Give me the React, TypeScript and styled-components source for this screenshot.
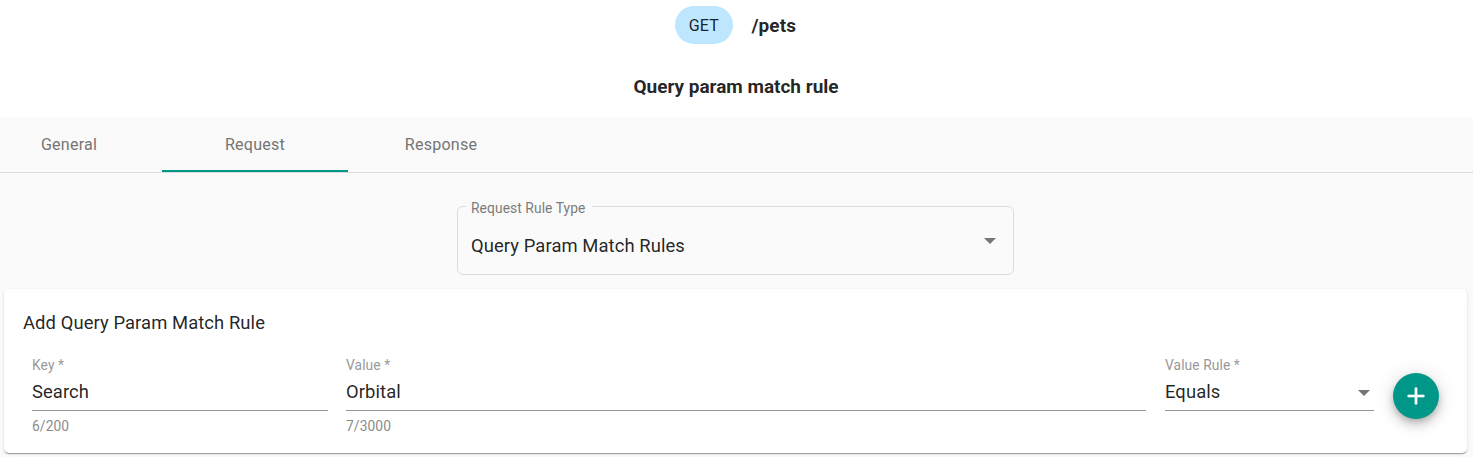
import React from 'react';
import styled, { createGlobalStyle } from 'styled-components';

const GlobalStyle = createGlobalStyle`
  *, *::before, *::after { box-sizing: border-box; }
  body {
    margin: 0;
    background: #fafafa;
    color: rgba(0, 0, 0, 0.87);
    font-family: Roboto, "Liberation Sans", sans-serif;
    font-size: 18.4px;
    font-weight: 400;
    letter-spacing: 0.09px;
  }
`;

const Page = styled.main`
  height: 457px;
  overflow: hidden;
`;

const Header = styled.header`
  height: 117px;
  padding: 6px 1px 0 0;
  background: #fff;
  display: flex;
  flex-direction: column;
  align-items: center;
`;

const Endpoint = styled.div`
  display: flex;
  align-items: center;
  gap: 18.5px;
  height: 38px;
  padding-right: 1px;
`;

const Method = styled.span`
  width: 58px;
  height: 38px;
  border-radius: 19px;
  background: #bfe6ff;
  line-height: 39px;
  text-align: center;
  font-size: 16.1px;
`;

const Path = styled.span`
  font-size: 19px;
  font-weight: 700;
  line-height: 38px;
  letter-spacing: 0.1px;
  padding-top: 1px;
`;

const Title = styled.h1`
  margin: 29px 0 0;
  font-size: 19px;
  font-weight: 700;
  line-height: 28px;
  letter-spacing: -0.02px;
`;

const TabBar = styled.nav`
  display: flex;
  height: 56px;
  margin-left: -24px;
  border-bottom: 1px solid #dcdcdc;
`;

const Tab = styled.button<{ $active?: boolean }>`
  width: 186px;
  height: 55px;
  padding: 2px 0 0;
  border: 0;
  border-bottom: 2px solid ${(p) => (p.$active ? '#009688' : 'transparent')};
  background: none;
  color: #757575;
  font-family: inherit;
  font-size: 16.1px;
  font-weight: 450;
  letter-spacing: 0.2px;
`;

const OutlinedSelect = styled.fieldset`
  width: 557px;
  height: 75px;
  margin: 27px 0 0 457px;
  padding: 11px 17px 0 13px;
  border: 1px solid #dcdcdc;
  border-radius: 6px;
  min-width: 0;
`;

const Legend = styled.legend`
  margin-left: -5px;
  padding: 0 7px 0 5px;
  height: 12px;
  line-height: 16px;
  font-size: 13.8px;
  color: #7c7c7c;
`;

const SelectValue = styled.div<{ $tall?: boolean }>`
  display: flex;
  align-items: center;
  justify-content: space-between;
  height: ${(p) => (p.$tall ? 46 : 32)}px;
  line-height: ${(p) => (p.$tall ? 46 : 32)}px;
`;

const Arrow = styled.svg<{ $lift?: number }>`
  display: block;
  width: 12px;
  height: 6px;
  margin-top: ${(p) => p.$lift ?? 0}px;
  fill: #757575;
`;

const Card = styled.section`
  width: 1463px;
  height: 164px;
  margin: 14px 0 0 4px;
  padding: 20px 19px 0;
  border-radius: 5px;
  background: #fff;
  box-shadow: 0 2px 1px -1px rgba(0, 0, 0, 0.2), 0 1px 1px rgba(0, 0, 0, 0.14),
    0 1px 3px rgba(0, 0, 0, 0.12);
`;

const CardTitle = styled.h2`
  margin: 0;
  font-size: 18.4px;
  font-weight: inherit;
  line-height: 28px;
`;

const Fields = styled.div`
  display: flex;
  align-items: flex-start;
  padding: 18px 0 0 9px;
`;

const Field = styled.div<{ $width: number; $gap: number }>`
  width: ${(p) => p.$width}px;
  margin-right: ${(p) => p.$gap}px;
`;

const Label = styled.div`
  height: 21px;
  line-height: 20px;
  font-size: 13.8px;
  color: #999;
`;

const Control = styled.div`
  height: 35px;
  border-bottom: 1px solid #949494;
`;

const Counter = styled.div`
  margin-top: 5px;
  line-height: 20px;
  font-size: 13.8px;
  color: #8c8c8c;
`;

const AddButton = styled.button`
  display: flex;
  align-items: center;
  justify-content: center;
  width: 46px;
  height: 46px;
  margin-top: 18px;
  padding: 0;
  border: 0;
  border-radius: 50%;
  background: #009688;
  box-shadow: 0 3px 6px -1px rgba(0, 0, 0, 0.2), 0 7px 12px rgba(0, 0, 0, 0.14),
    0 1px 20px rgba(0, 0, 0, 0.12);
`;

const DropArrow = ({ lift }: { lift?: number }) => (
  <Arrow $lift={lift} viewBox="0 0 12 6" aria-hidden="true">
    <path d="M0 0h12L6 6z" />
  </Arrow>
);

const DropdownValue = styled(SelectValue)`
  padding-right: 4px;
`;

export default function App() {
  return (
    <Page>
      <GlobalStyle />
      <Header>
        <Endpoint>
          <Method>GET</Method>
          <Path>/pets</Path>
        </Endpoint>
        <Title>Query param match rule</Title>
      </Header>
      <TabBar>
        <Tab>General</Tab>
        <Tab $active>Request</Tab>
        <Tab>Response</Tab>
      </TabBar>
      <OutlinedSelect>
        <Legend>Request Rule Type</Legend>
        <SelectValue $tall>
          <span>Query Param Match Rules</span>
          <DropArrow lift={-11} />
        </SelectValue>
      </OutlinedSelect>
      <Card>
        <CardTitle>Add Query Param Match Rule</CardTitle>
        <Fields>
          <Field $width={296} $gap={18}>
            <Label>Key *</Label>
            <Control><SelectValue>Search</SelectValue></Control>
            <Counter>6/200</Counter>
          </Field>
          <Field $width={800} $gap={19}>
            <Label>Value *</Label>
            <Control><SelectValue>Orbital</SelectValue></Control>
            <Counter>7/3000</Counter>
          </Field>
          <Field $width={209} $gap={19}>
            <Label>Value Rule *</Label>
            <Control>
              <DropdownValue>
                <span>Equals</span>
                <DropArrow lift={2} />
              </DropdownValue>
            </Control>
          </Field>
          <AddButton aria-label="Add rule">
            <svg width="28" height="28" viewBox="0 0 24 24" fill="#fff">
              <path d="M19 12.9h-6.1V19h-1.8v-6.1H5v-1.8h6.1V5h1.8v6.1H19z" stroke="#fff" strokeWidth="0.5" />
            </svg>
          </AddButton>
        </Fields>
      </Card>
    </Page>
  );
}
